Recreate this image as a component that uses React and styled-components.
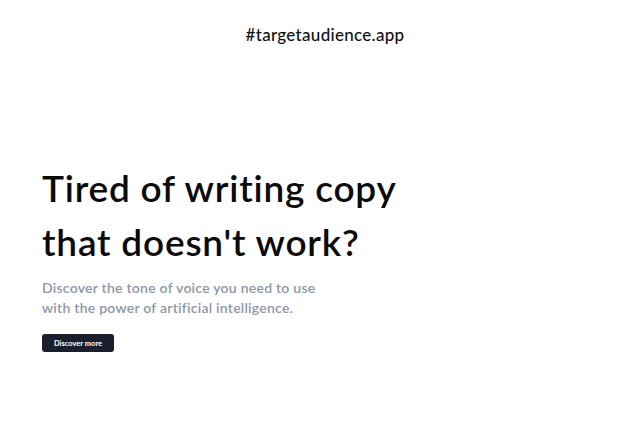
import React from 'react';
import styled, { createGlobalStyle } from 'styled-components';

const GlobalStyle = createGlobalStyle`
  html, body {
    margin: 0;
    padding: 0;
    background: #fff;
    font-family: Lato, "Noto Sans", sans-serif;
    -webkit-font-smoothing: antialiased;
  }
`;

const Page = styled.div`
  width: 640px;
  height: 444px;
  display: flex;
  flex-direction: column;
  box-sizing: border-box;
`;

const Header = styled.header`
  display: flex;
  justify-content: center;
  padding: 24px 0 0 10px;
`;

const Brand = styled.div`
  font-size: 17px;
  font-weight: 500;
  color: #111;
  letter-spacing: 0.3px;
`;

const Hero = styled.section`
  padding: 116px 0 0 42px;
  display: flex;
  flex-direction: column;
  align-items: flex-start;
`;

const Title = styled.h1`
  margin: 0;
  font-size: 37px;
  line-height: 54px;
  font-weight: 600;
  color: #0b0b0b;
  letter-spacing: 0.8px;
`;

const Lead = styled.p`
  margin: 9px 0 0;
  font-size: 14px;
  line-height: 20px;
  color: #8d97a8;
  font-weight: 600;
  letter-spacing: 0.25px;
`;

const Button = styled.button`
  margin-top: 16px;
  height: 18px;
  width: 72px;
  padding: 0;
  border: 0;
  border-radius: 3px;
  background: #1b1f2c;
  color: #fff;
  font-family: inherit;
  font-size: 7.5px;
  font-weight: 700;
  cursor: pointer;
`;

export default function App() {
  return (
    <>
      <GlobalStyle />
      <Page>
        <Header>
          <Brand>#targetaudience.app</Brand>
        </Header>
        <Hero>
          <Title>
            Tired of writing copy
            <br />
            that doesn't work?
          </Title>
          <Lead>
            Discover the tone of voice you need to use
            <br />
            with the power of artificial intelligence.
          </Lead>
          <Button>Discover more</Button>
        </Hero>
      </Page>
    </>
  );
}
